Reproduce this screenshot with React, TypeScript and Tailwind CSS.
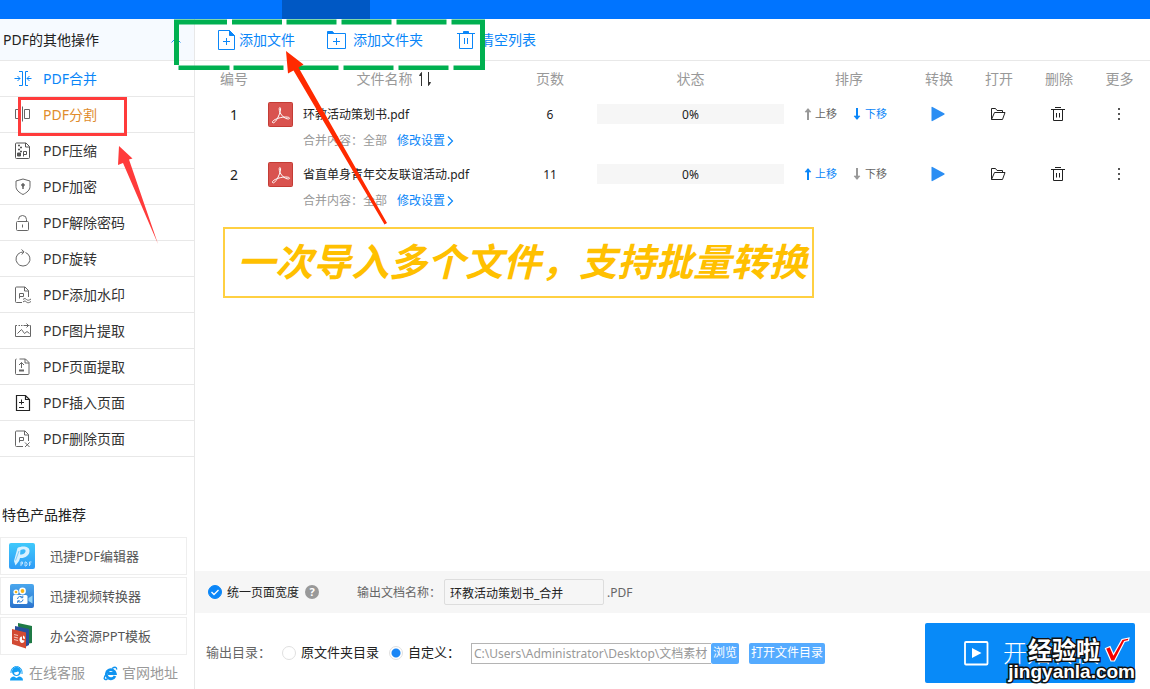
import React, { useState } from "react";

type IconProps = { className?: string };

function Icon({
  size = 20,
  className = "",
  children,
}: {
  size?: number;
  className?: string;
  children: React.ReactNode;
}) {
  return (
    <svg
      width={size}
      height={size}
      viewBox={`0 0 ${size} ${size}`}
      fill="none"
      stroke="currentColor"
      strokeWidth="1"
      className={`shrink-0 ${className}`}
      aria-hidden="true"
    >
      {children}
    </svg>
  );
}

const MergeIcon = () => (
  <Icon>
    <path d="M6 2.5h3.5v14H6M15 2.5h-2.5v14H15M1.5 9.5h5.5M18.500 9.500H14" />
    <path d="M4.500 7l2.500 2.500L4.500 12M16.500 7L14 9.500l2.500 2.500" />
  </Icon>
);
const SplitIcon = () => (
  <Icon>
    <path d="M5 4.500H2.500v9H5M9.500 1.500v15M11.500 4.500h5v9h-5z" />
  </Icon>
);
const CompressIcon = () => (
  <Icon>
    <path d="M3.500 2h9.500l3.500 3.500V16.500a1 1 0 0 1-1 1h-12a1 1 0 0 1-1-1V3a1 1 0 0 1 1-1zM12.500 2v4h4" />
    <path d="M5 4.500h2M7 6.500h2M5 8.500h2M7 10.500h2" strokeWidth="1.300" />
    <path d="M4.500 12h3v3h-3z" fill="currentColor" />
    <path d="M10.500 15.500v-5h3v3h-3" />
  </Icon>
);
const ShieldIcon = () => (
  <Icon>
    <path d="M10 2l7 2v5.500c0 3.500-3 6-7 8-4-2-7-4.500-7-8V4z" />
    <circle cx="10" cy="8" r="1.300" fill="currentColor" />
    <path d="M10 8.500v3.500" strokeWidth="1.500" />
  </Icon>
);
const LockIcon = () => (
  <Icon>
    <rect x="3.500" y="8.500" width="12" height="9" rx="1" />
    <path d="M5.500 6.500a4 4 0 0 1 8 0v2M9.500 11.500v3" />
  </Icon>
);
const RotateIcon = () => (
  <Icon>
    <path d="M12.500 3.500a7 7 0 1 1-5 0L11 2.800M8.500.500L11 2.800 8.800 5.500" />
  </Icon>
);
const WatermarkIcon = () => (
  <Icon>
    <path d="M9 17.500H3.500a1 1 0 0 1-1-1V3a1 1 0 0 1 1-1h8.500l3.500 3.500V12M11.500 2v4h4" />
    <path d="M6.500 13.500v-5h4v3h-4" />
    <path d="M10 14.500c1.500-1.500 2.500-1 3.500 0s2.500 1 4.500-.500M10 17c1.500-1.500 2.500-1 3.500 0s2.500 1 4.500-.500" />
  </Icon>
);
const PictureIcon = () => (
  <Icon>
    <path d="M4 4.500H2.500v11h15v-11h-1" />
    <path d="M5.500 4.500h7" strokeDasharray="1.500 1" />
    <path d="M11 4.500h5M13.500 2.500L15.500 4.500l-2 2" />
    <path d="M4.500 12.500l4-4 3 4 2.500-2 2.500 2" />
  </Icon>
);
const PageExtractIcon = () => (
  <Icon>
    <path d="M6.500 2h6l3.500 3.500V16.500a1 1 0 0 1-1 1H3.500a1 1 0 0 1-1-1V3a1 1 0 0 1 1-1M12 2v4h4" />
    <path d="M8.500 11V5.500M6 8l2.500-2.500L11 8" />
    <path d="M6 13.500h5" strokeWidth="2" />
  </Icon>
);
const PageInsertIcon = () => (
  <Icon>
    <path d="M3.500 2.500h9l4 4v11h-13zM12.500 2.500v4h4" strokeWidth="1.200" />
    <path d="M8.500 6.500v5M6 9.500h5M6 14.500h5" />
  </Icon>
);
const PageDeleteIcon = () => (
  <Icon>
    <path d="M10 17.500H3.500a1 1 0 0 1-1-1V3a1 1 0 0 1 1-1h8.500l3.500 3.500V12M11.500 2v4h4" />
    <path d="M6.500 13.500v-5h4v3h-4M12 13.500l4.500 4.500M16.500 13.500L12 18" />
  </Icon>
);

const operations = [
  { label: "PDF合并", icon: MergeIcon, text: "text-[#0a86f8]", tint: "text-[#0a86f8]" },
  { label: "PDF分割", icon: SplitIcon, text: "text-[#e08c2c]", tint: "text-[#666666]" },
  { label: "PDF压缩", icon: CompressIcon, text: "text-[#333333]", tint: "text-[#555555]" },
  { label: "PDF加密", icon: ShieldIcon, text: "text-[#333333]", tint: "text-[#666666]" },
  { label: "PDF解除密码", icon: LockIcon, text: "text-[#333333]", tint: "text-[#666666]" },
  { label: "PDF旋转", icon: RotateIcon, text: "text-[#333333]", tint: "text-[#666666]" },
  { label: "PDF添加水印", icon: WatermarkIcon, text: "text-[#333333]", tint: "text-[#666666]" },
  { label: "PDF图片提取", icon: PictureIcon, text: "text-[#333333]", tint: "text-[#666666]" },
  { label: "PDF页面提取", icon: PageExtractIcon, text: "text-[#333333]", tint: "text-[#666666]" },
  { label: "PDF插入页面", icon: PageInsertIcon, text: "text-[#333333]", tint: "text-[#222222]" },
  { label: "PDF删除页面", icon: PageDeleteIcon, text: "text-[#333333]", tint: "text-[#666666]" },
];

const EditorLogo = () => (
  <svg width="26" height="26" viewBox="0 0 26 26" className="shrink-0" aria-hidden="true">
    <defs>
      <linearGradient id="editor" x1="0" y1="0" x2="0" y2="1">
        <stop offset="0" stopColor="#3fc9fb" />
        <stop offset="1" stopColor="#2f9bf6" />
      </linearGradient>
    </defs>
    <rect width="26" height="26" rx="2" fill="url(#editor)" />
    <path d="M8.500 5C12 3 20 2.500 20.500 7.500c.300 5-5 8-9.500 7.500l-1 3-3.500 4.500L5 18z" fill="#d9f1ff" />
    <path d="M11.500 7c3-1.500 5.500-1 5 1.500s-3.500 3-5.500 3z" fill="#3bb8f9" />
    <path d="M6.500 17.500L10 8" stroke="#7fcdf9" fill="none" />
    <path d="M12 23v-4h1.500v2H12M16 19v4h1l1-1v-2l-1-1zM20.500 23v-4h2M20.500 21h1.500" stroke="#c9e8ff" strokeWidth=".9" fill="none" />
  </svg>
);
const VideoLogo = () => (
  <svg width="26" height="26" viewBox="0 0 26 26" className="shrink-0" aria-hidden="true">
    <defs>
      <linearGradient id="video" x1="0" y1="0" x2="0" y2="1">
        <stop offset="0" stopColor="#4aa7ee" />
        <stop offset="1" stopColor="#2a73cd" />
      </linearGradient>
    </defs>
    <rect x="1" y="1" width="24" height="24" rx="2" fill="url(#video)" />
    <circle cx="7" cy="9" r="2.600" fill="#fff" />
    <circle cx="13.500" cy="8" r="3.400" fill="#fff" />
    <circle cx="7" cy="9" r="1.300" fill="#f7b516" />
    <circle cx="13.500" cy="8" r="1.900" fill="#f7b516" />
    <rect x="4" y="12" width="14.500" height="9" rx="1.500" fill="#fff" />
    <path d="M19.500 15l4-2.500v8l-4-2.500z" fill="#8fd3f7" />
    <path d="M8.500 16a2.800 2.800 0 0 1 5-1.500M14 16.500a2.800 2.800 0 0 1-5 1.500M13.800 12.500v2.200h-2.200M8.700 20v-2.200h2.200" stroke="#2d7fd6" fill="none" />
  </svg>
);
const SlidesLogo = () => (
  <svg width="26" height="26" viewBox="0 0 26 26" className="shrink-0" aria-hidden="true">
    <path d="M9 0l14 3v17l-6 1L9 3z" fill="#1f7a45" />
    <path d="M6 3l14 3v16l-4 2L6 9z" fill="#274f9c" />
    <path d="M3 6l14 3.500V25.500L3 21z" fill="#d24a33" />
    <path d="M5 11.500l4 1M5 14l4 1M5 16.500l4 1" stroke="#f3c4b8" strokeWidth="1.200" />
    <path d="M13 13.500c-2 0-2.500 1.500-2.500 3s1 3.500 2.500 3.500 2.500-1 2.500-2.500L13 17z" fill="#fff" />
    <path d="M14 12.500v3l2 .500c0-2-.500-3-2-3.500z" fill="#fff" />
  </svg>
);

const products = [
  { label: "迅捷PDF编辑器", logo: EditorLogo },
  { label: "迅捷视频转换器", logo: VideoLogo },
  { label: "办公资源PPT模板", logo: SlidesLogo },
];

function Sidebar() {
  return (
    <aside className="flex w-[195px] shrink-0 flex-col border-r border-[#e8e8e8] bg-white">
      <button className="flex h-[42px] items-center justify-between border-b border-[#e8e8e8] bg-[#f6faff] pt-px pr-3 pl-[3px] text-sm text-[#222222]">
        <span>PDF的其他操作</span>
        <svg width="12" height="8" viewBox="0 0 12 8" fill="none" stroke="#2b94f5" aria-hidden="true">
          <path d="M1.500 6.500L6 2l4.500 4.500" />
        </svg>
      </button>
      <nav>
        {operations.map(({ label, icon: Glyph, text, tint }) => (
          <a
            key={label}
            href="#"
            className="flex h-9 items-center gap-[10px] border-b border-[#e8e8e8] pl-[13px] text-sm"
          >
            <span className={tint}>
              <Glyph />
            </span>
            <span className={`pt-px ${text}`}>{label}</span>
          </a>
        ))}
      </nav>
      <h2 className="mt-12 pl-[2px] text-sm leading-5 text-[#222222]">特色产品推荐</h2>
      <div className="mt-3 mr-[7px] flex flex-col gap-[2px]">
        {products.map(({ label, logo: Logo }) => (
          <a
            key={label}
            href="#"
            className="flex h-[38px] items-center gap-[15px] border border-[#eeeeee] pl-2 text-[13px] text-[#555555]"
          >
            <Logo />
            <span className="pt-[2px]">{label}</span>
          </a>
        ))}
      </div>
      <div className="mt-2 flex gap-[18px] pl-[9px] text-sm leading-5 text-[#999999]">
        <a href="#" className="flex items-center gap-[5px]">
          <svg width="15" height="15" viewBox="0 0 15 15" className="shrink-0" aria-hidden="true">
            <circle cx="7.500" cy="5.500" r="4.500" fill="#129ff5" />
            <path d="M2 7V6a5.500 5.500 0 0 1 11 0v2" stroke="#129ff5" fill="none" />
            <path d="M5 6.500c2 0 3.500-.500 4-1.200l1 1.200c0 1.500-1.200 2.500-2.500 2.500S5 8 5 6.500z" fill="#fff" />
            <path d="M1 14.500c0-3 2-4 4-4l2.500 1.500 2.500-1.500c2 0 4 1 4 4z" fill="#129ff5" />
          </svg>
          在线客服
        </a>
        <a href="#" className="flex items-center gap-[4px]">
          <svg width="15" height="15" viewBox="0 0 15 15" className="shrink-0" aria-hidden="true">
            <path d="M12 10a4.500 4.500 0 1 1 .3-2.500H5" stroke="#0f93f0" strokeWidth="2.800" fill="none" />
            <path d="M9 2.500c3-2 5-1.500 4.500 1M3 8.500c-3 4-2 6 1.500 4.500" stroke="#0f93f0" strokeWidth="1.400" fill="none" />
          </svg>
          官网地址
        </a>
      </div>
    </aside>
  );
}

function Toolbar() {
  return (
    <div className="flex h-[42px] items-center border-b border-[#e8e8e8] pl-[22px] text-sm text-[#0a86f8]">
      <button className="flex items-center gap-[2px]">
        <Icon size={20}>
          <path d="M1.500.500h11l5 5v14h-16z" />
          <path d="M12.500.500v5h5z" fill="currentColor" />
          <path d="M9.500 8v7M6 11.500h7" />
        </Icon>
        <span className="pt-px">添加文件</span>
      </button>
      <button className="ml-8 flex items-center gap-[6px]">
        <Icon size={20}>
          <path d="M.500 3.500h18v15H.500z" />
          <path d="M.500 1.500h5l1.500 2H.500z" fill="currentColor" />
          <path d="M9.500 8v7M6 11.500h7" />
        </Icon>
        <span className="pt-px">添加文件夹</span>
      </button>
      <button className="ml-[33px] flex items-center gap-[4px]">
        <Icon size={20}>
          <path d="M1 3.500h18M3.500 3.500v15h13v-15" />
          <path d="M7.500 3V1.500h5V3z" fill="currentColor" />
          <path d="M8.500 8v6M11.500 8v6" />
        </Icon>
        <span className="pt-px">清空列表</span>
      </button>
    </div>
  );
}

const PdfBadge = () => (
  <svg width="25" height="25" viewBox="0 0 25 25" className="shrink-0" aria-hidden="true">
    <rect x=".5" y=".5" width="24" height="24" rx="1" fill="#d9534f" stroke="#c43c35" />
    <path
      d="M4.500 20.500c-.800-1.500 3-3.500 6.500-4.500 4-1.200 10.500-1.500 10.500.200 0 1.500-3.500.800-6-1.200-3-2.500-4.500-6-4.300-8.500.200-1.500 1.400-1.300 1.400.300 0 3-1.800 7.500-4 11-1.500 2.300-3.300 3.800-4.100 2.700z"
      fill="none"
      stroke="#ffffff"
    />
  </svg>
);

const SortArrow = ({ down = false, className = "" }: IconProps & { down?: boolean }) => (
  <svg
    width="8"
    height="12"
    viewBox="0 0 8 12"
    className={`shrink-0 ${down ? "rotate-180" : ""} ${className}`}
    fill="none"
    stroke="currentColor"
    aria-hidden="true"
  >
    <path d="M4 12V1" strokeWidth="2" />
    <path d="M1 4l3-3.500L7 4z" fill="currentColor" strokeWidth=".6" />
  </svg>
);

const files = [
  { name: "环教活动策划书.pdf", pages: 6 },
  { name: "省直单身青年交友联谊活动.pdf", pages: 11 },
];

function FileTable() {
  const action = "flex h-[34px] w-full items-center justify-center pr-[2px]";
  return (
    <table className="w-full table-fixed border-collapse text-center text-xs text-[#222222]">
      <colgroup>
        <col className="w-[73px]" />
        <col />
        <col className="w-[60px]" />
        <col className="w-[221px]" />
        <col className="w-[108px]" />
        <col className="w-[60px]" />
        <col className="w-[60px]" />
        <col className="w-[60px]" />
        <col className="w-[61px]" />
      </colgroup>
      <thead>
        <tr className="h-9 text-sm text-[#999999]">
          <th className="pl-[5px] font-normal">编号</th>
          <th className="font-normal">
            <button className="inline-flex items-center gap-[5px]">
              文件名称
              <svg width="14" height="14" viewBox="0 0 14 14" fill="none" stroke="#333333" aria-hidden="true">
                <path d="M3.500 14V1M10.500 0v13" />
                <path d="M1.500 3.500l2-3v3zM12.500 10.500l-2 3v-3z" fill="#333333" />
              </svg>
            </button>
          </th>
          <th className="font-normal">页数</th>
          <th className="font-normal">状态</th>
          <th className="pr-3 font-normal">排序</th>
          <th className="font-normal">转换</th>
          <th className="font-normal">打开</th>
          <th className="font-normal">删除</th>
          <th className="font-normal">更多</th>
        </tr>
      </thead>
      <tbody>
        {files.map((file, index) => {
          const first = index === 0;
          const last = index === files.length - 1;
          return (
            <tr key={file.name} className="h-[60px] align-top">
              <td className="pl-[5px] text-sm leading-[35px]">{index + 1}</td>
              <td className="text-left">
                <div className="flex h-[34px] items-center gap-[10px] whitespace-nowrap">
                  <PdfBadge />
                  <span className="pt-[2px]">{file.name}</span>
                </div>
                <div className="flex h-5 items-center pl-[35px] whitespace-nowrap text-[#999999]">
                  合并内容：全部
                  <a href="#" className="ml-[10px] flex items-center gap-[2px] text-[#0a86f8]">
                    修改设置
                    <svg width="7" height="10" viewBox="0 0 7 10" fill="none" stroke="currentColor" aria-hidden="true">
                      <path d="M1 .500L5.500 5 1 9.500" strokeWidth="1.200" />
                    </svg>
                  </a>
                </div>
              </td>
              <td className="leading-[36px]">{file.pages}</td>
              <td className="px-[17px] pt-[7px]">
                <div className="h-5 bg-[#f6f6f6] leading-[22px]">0%</div>
              </td>
              <td className="pl-[3px] text-[11px]">
                <div className="flex h-[34px] items-center gap-4">
                  <button className={`flex items-center gap-[3px] ${first ? "text-[#666666]" : "text-[#0a86f8]"}`}>
                    <SortArrow className={first ? "text-[#999999]" : ""} />
                    上移
                  </button>
                  <button className={`flex items-center gap-1 ${last ? "text-[#666666]" : "text-[#0a86f8]"}`}>
                    <SortArrow down className={last ? "text-[#999999]" : ""} />
                    下移
                  </button>
                </div>
              </td>
              <td>
                <button aria-label="转换" className={action}>
                  <svg width="14" height="16" viewBox="0 0 14 16" aria-hidden="true">
                    <path d="M.500 1.500Q.500.500 1.500 1L13.500 7.500v1L1.500 15Q.500 15.500.500 14.500z" fill="#2b8ef3" />
                  </svg>
                </button>
              </td>
              <td>
                <button aria-label="打开" className={action}>
                  <Icon size={16} className="text-[#222222]">
                    <path d="M1.500 13.500v-11h4l1.500 2h5.500v2M1.500 13.500L4.500 6.500h10.500l-2.500 7z" />
                  </Icon>
                </button>
              </td>
              <td>
                <button aria-label="删除" className={action}>
                  <Icon size={16} className="text-[#222222]">
                    <path d="M1 3.500h14M3.500 3.500v11h9v-11M5 1.500h6M6.500 7v4.500M9.500 7v4.500" />
                  </Icon>
                </button>
              </td>
              <td>
                <button aria-label="更多" className={action}>
                  <svg width="2" height="12" viewBox="0 0 2 12" fill="#555555" aria-hidden="true">
                    <path d="M0 0h2v2H0zM0 5h2v2H0zM0 10h2v2H0z" />
                  </svg>
                </button>
              </td>
            </tr>
          );
        })}
      </tbody>
    </table>
  );
}

function OutputOptions() {
  const [unified, setUnified] = useState(true);
  const [target, setTarget] = useState("custom");
  const radio =
    "h-[14px] w-[14px] appearance-none rounded-full border border-[#e0e0e0] bg-white checked:bg-[radial-gradient(circle,#1a86f5_0_4px,transparent_5px)]";
  return (
    <footer>
      <div className="flex h-[42px] items-center bg-[#f6f6f6] pl-[13px] text-xs text-[#222222]">
        <label className="flex items-center gap-[5px]">
          <span className="grid h-[14px] w-[14px] place-items-center">
            <input
              type="checkbox"
              checked={unified}
              onChange={(event) => setUnified(event.target.checked)}
              className="col-start-1 row-start-1 h-[14px] w-[14px] appearance-none rounded-full border border-[#0a86f8] checked:bg-[#0a86f8]"
            />
            <svg
              width="14"
              height="14"
              viewBox="0 0 14 14"
              fill="none"
              stroke="#ffffff"
              strokeWidth="1.300"
              className="pointer-events-none col-start-1 row-start-1"
              aria-hidden="true"
            >
              <path d="M3.500 7l2.500 2.500L10.500 5" />
            </svg>
          </span>
          <span className="pt-[2px]">统一页面宽度</span>
        </label>
        <button
          aria-label="帮助"
          className="ml-[6px] h-[14px] w-[14px] rounded-full bg-[#999999] text-center text-[11px] leading-[14px] font-bold text-white"
        >
          ?
        </button>
        <label htmlFor="output-name" className="ml-[38px] pt-[2px] text-[#666666]">
          输出文档名称：
        </label>
        <input
          id="output-name"
          type="text"
          defaultValue="环教活动策划书_合并"
          className="ml-[3px] h-[26px] w-40 rounded-[2px] border border-[#dddddd] bg-transparent px-[5px] pt-px"
        />
        <span className="ml-[3px] pt-[2px] text-[#666666]">.PDF</span>
      </div>
      <div className="flex items-center pt-[10px] pr-[15px] pb-[6px] pl-[11px] text-[13px] text-[#222222]">
        <span className="w-[76px] shrink-0 text-[#666666]">输出目录：</span>
        <label className="flex shrink-0 items-center gap-[5px]">
          <input
            type="radio"
            name="target"
            checked={target === "source"}
            onChange={() => setTarget("source")}
            className={radio}
          />
          原文件夹目录
        </label>
        <label className="ml-[10px] flex shrink-0 items-center gap-[5px]">
          <input
            type="radio"
            name="target"
            checked={target === "custom"}
            onChange={() => setTarget("custom")}
            className={radio}
          />
          自定义：
        </label>
        <input
          type="text"
          aria-label="输出目录"
          defaultValue="C:\Users\Administrator\Desktop\文档素材"
          className="ml-[11px] h-[21px] w-[240px] min-w-0 border border-r-0 border-[#b4b4b4] pl-[2px] text-xs text-[#999999]"
        />
        <button className="h-[21px] shrink-0 rounded-[2px] bg-[#55abff] px-[2px] text-xs text-white">浏览</button>
        <button className="ml-[10px] h-[21px] shrink-0 rounded-[2px] bg-[#55abff] px-[2px] text-xs text-white">
          打开文件目录
        </button>
        <button className="relative ml-auto flex h-[60px] w-[210px] shrink-0 items-center gap-[14px] rounded-[2px] bg-[#088af8] pl-[39px] text-2xl font-light text-white">
          <svg width="25" height="25" viewBox="0 0 25 25" className="shrink-0" aria-hidden="true">
            <rect x="1" y="1" width="22.500" height="22.500" rx="1" fill="none" stroke="#ffffff" strokeWidth="1.800" />
            <path d="M8 7l9.500 5L8 17z" fill="#ffffff" />
          </svg>
          开始转换
          <Watermark />
        </button>
      </div>
    </footer>
  );
}

function Watermark() {
  const outline = "font-bold text-white [-webkit-text-stroke:3px_#111111] [paint-order:stroke_fill]";
  return (
    <span className="absolute top-[15px] right-0 flex flex-col items-end whitespace-nowrap">
      <span className="flex h-6 items-center gap-1 pr-[5px]">
        <span className={`text-2xl leading-6 ${outline}`}>经验啦</span>
        <svg width="26" height="26" viewBox="0 0 26 26" aria-hidden="true">
          <path
            d="M1.500 11.500L6 9.500l3.500 8L18 2.500l7-1.500-.500 2.500-4 1L10.500 24H7z"
            fill="#f40000"
            stroke="#ffffff"
            strokeWidth="1.200"
          />
        </svg>
      </span>
      <span className={`font-["Liberation_Sans"] text-[19px] leading-5 ${outline}`}>jingyanla.com</span>
    </span>
  );
}

function Annotations() {
  return (
    <div className="pointer-events-none absolute top-0 left-0">
      <svg width="820" height="300" viewBox="0 0 820 300" className="max-w-none" aria-hidden="true">
        <g fill="#00b050">
          <path d="M174 19.500h53v5h-48V65h-5zM232 19.500h50v5h-50zM286.500 19.500h50v5h-50zM341.500 19.500h50v5h-50zM396.500 19.500h50v5h-50zM451.500 19.500H485V70h-31.500v-4.500H480v-41h-28.500z" />
          <path d="M178.500 65.500h51V70h-51zM233.500 65.500h50V70h-50zM288.500 65.500h50V70h-50zM343.500 65.500h50V70h-50zM398.500 65.500h50V70h-50z" />
        </g>
        <rect x="19.500" y="98.500" width="106" height="36" fill="none" stroke="#ff3b3b" strokeWidth="3" />
        <path d="M119 146l13.500 12.500-3.500 1L158 244l-35-81-5 2z" fill="#ff3b3b" />
        <path d="M286 51l17.500 13.500-5 3L387 223l-2.500 1.500L293.500 70.500l-5.500 3z" fill="#ff2a00" />
      </svg>
      <p className="absolute top-[227px] left-[223px] flex h-[71px] w-[591px] items-center border-2 border-[#ffd042] pb-1 pl-3 text-[38px] leading-none font-bold whitespace-nowrap text-[#ffc000] italic">
        一次导入多个文件，支持批量转换
      </p>
    </div>
  );
}

export default function App() {
  return (
    <div className='relative flex min-h-screen flex-col bg-white font-["Noto_Sans","Noto_Sans_CJK_SC",sans-serif]'>
      <header className="flex h-[19px] bg-[#0074ff] pl-[282px]">
        <div className="w-[88px] bg-[#0058c4]" />
      </header>
      <div className="flex flex-1">
        <Sidebar />
        <main className="flex min-w-0 flex-1 flex-col">
          <Toolbar />
          <div className="flex-1">
            <FileTable />
          </div>
          <OutputOptions />
        </main>
      </div>
      <Annotations />
    </div>
  );
}
